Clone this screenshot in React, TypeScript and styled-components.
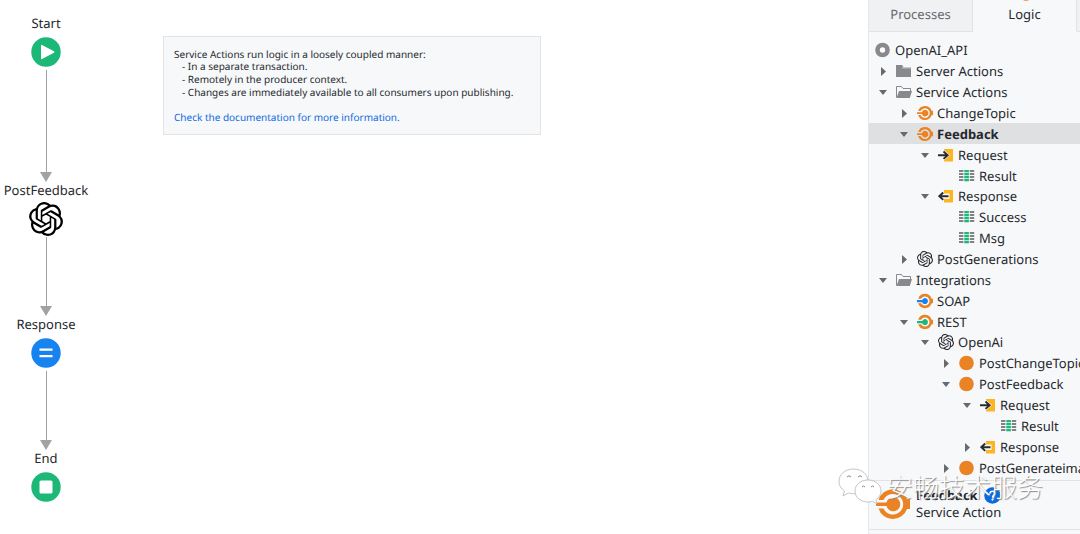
import React from "react";
import styled, { createGlobalStyle, css } from "styled-components";
import { SiOpenai } from "react-icons/si";

const GlobalStyle = createGlobalStyle`
  *, *::before, *::after { box-sizing: border-box; }
  body {
    margin: 0;
    background: #fff;
    color: #25282d;
    font-family: "Noto Sans", "Noto Sans CJK SC", sans-serif;
    font-size: 13px;
    line-height: 18px;
    text-rendering: geometricPrecision;
  }
  button { font: inherit; color: inherit; border: 0; padding: 0; background: none; cursor: pointer; text-rendering: inherit; }
`;

const Page = styled.div`
  position: relative;
  display: flex;
  min-height: 100vh;
  overflow: hidden;
`;

const Canvas = styled.main`
  flex: 1;
  min-width: 0;
  display: flex;
  align-items: flex-start;
  gap: 71px;
`;

const Flow = styled.div`
  display: flex;
  flex-direction: column;
  align-items: center;
  width: 92px;
  padding-top: 15px;
`;

const FlowNode = styled.div`
  display: flex;
  flex-direction: column;
  align-items: center;
  gap: 4px;
  line-height: 16px;
`;

const NodeIcon = styled.div`
  display: grid;
  place-items: center;
  width: 34px;
  height: 34px;
  color: #000;
`;

const Connector = styled.div<{ $length: number }>`
  display: flex;
  flex-direction: column;
  align-items: center;
  height: ${(p) => p.$length}px;
  padding-top: 1px;
  &::before {
    content: "";
    flex: 1;
    width: 1px;
    background: #a1a2a5;
  }
  &::after {
    content: "";
    border: 6px solid transparent;
    border-top: 10px solid #a1a2a5;
    border-bottom: 0;
  }
`;

const Comment = styled.section`
  width: 378px;
  margin-top: 36px;
  padding: 11px 11px 11px 10px;
  border: 1px solid #e2e3e5;
  background: #f7f8fa;
  font-size: 10px;
  line-height: 12px;
  white-space: nowrap;
`;

const CommentText = styled.p`
  margin: 0;
`;

const CommentList = styled.ul`
  list-style: none;
  margin: 0 0 12px;
  padding: 0 0 0 8px;
  line-height: 13px;
`;

const DocLink = styled.a`
  color: #0f6be0;
  text-decoration: none;
`;

const Panel = styled.aside`
  display: flex;
  flex-direction: column;
  flex: none;
  width: 212px;
  border-left: 1px solid #e6e7e9;
  background: #f7f8fa;
  overflow: hidden;
`;

const Tabs = styled.div`
  display: flex;
  height: 32px;
`;

const Tab = styled.button<{ $active?: boolean }>`
  position: relative;
  flex: none;
  width: 104px;
  padding-bottom: 3px;
  border-right: 1px solid #e2e3e5;
  border-bottom: 1px solid #e2e3e5;
  background: #f0f1f3;
  color: #66686d;
  ${(p) =>
    p.$active &&
    css`
      border-bottom-color: transparent;
      background: transparent;
      color: #25282d;
    `}
`;

const TabMark = styled.span`
  position: absolute;
  top: -7px;
  left: 49px;
  width: 8px;
  height: 8px;
  border-radius: 50%;
  background: #f29b57;
`;

const Tree = styled.ul`
  flex: 1;
  display: grid;
  grid-auto-rows: minmax(0, 1fr);
  margin: 0;
  padding: 8px 0 2px;
  list-style: none;
`;

const TreeRow = styled.li<{ $depth: number; $selected?: boolean }>`
  display: flex;
  align-items: center;
  gap: 4px;
  padding-left: ${(p) => 6 + Math.max(0, p.$depth - 1) * 21}px;
  white-space: nowrap;
  ${(p) =>
    p.$selected &&
    css`
      background: #dfe0e2;
      font-weight: 700;
    `}
`;

const Toggle = styled.button`
  display: grid;
  place-items: center start;
  padding-left: 3px;
  width: 17px;
  height: 16px;
`;

const ToggleSpace = styled.span`
  width: 17px;
`;

const RowIcon = styled.span`
  display: grid;
  place-items: center;
  width: 16px;
  height: 16px;
`;

const Details = styled.section`
  display: flex;
  gap: 6px;
  margin-bottom: 4px;
  padding: 6px 0 8px 7px;
  border-top: 1px solid #e2e3e5;
  border-bottom: 1px solid #e2e3e5;
  line-height: 17px;
`;

const DetailsTitle = styled.div`
  display: flex;
  align-items: center;
  gap: 6px;
  height: 17px;
  font-weight: 700;
`;

const HelpButton = styled.button`
  display: grid;
  place-items: center;
`;

const Watermark = styled.div`
  position: absolute;
  right: 37px;
  bottom: 28px;
  display: flex;
  align-items: center;
  gap: 5px;
  color: #fff;
  font-family: "Noto Sans CJK SC", sans-serif;
  font-size: 26px;
  font-weight: 300;
  line-height: 38px;
  text-shadow: 1px 1px 1px #85878a;
  pointer-events: none;
`;

const Circle = ({ color, children }: { color: string; children: React.ReactNode }) => (
  <svg width="30" height="30" viewBox="0 0 30 30" aria-hidden="true">
    <circle cx="15" cy="15" r="14.7" fill={color} />
    {children}
  </svg>
);

const StartIcon = () => (
  <Circle color="#1bb877">
    <path d="M10 8.5v13q0 1 1 .6l12-6.4q1-.7 0-1.4l-12-6.4q-1-.4-1 .6z" fill="#fff" />
  </Circle>
);

const AssignIcon = () => (
  <Circle color="#1683f0">
    <path d="M8.5 10.5h13v2.3h-13zM8.5 16.9h13v2.3h-13z" fill="#fff" />
  </Circle>
);

const EndIcon = () => (
  <Circle color="#1bb877">
    <rect x="8.5" y="8.5" width="13" height="13" rx="1.6" fill="#fff" />
  </Circle>
);

const ServiceIcon = ({ size = 16 }: { size?: number }) => (
  <svg width={size} height={size} viewBox="0 0 34 34" aria-hidden="true">
    <path d="M2.5 13A15 15 0 0 1 31 12h3v10h-3A15 15 0 0 1 2.5 21.5H7.5a10.3 10.3 0 1 0 0-8.5z" fill="#e98324" />
    <path d="M0 15.5h10.5a7 7 0 1 1 0 3.6H0z" fill="#e98324" />
  </svg>
);

const EndpointIcon = ({ color }: { color: string }) => (
  <svg width="16" height="16" viewBox="0 0 34 34" aria-hidden="true">
    <path d="M2.5 12A15 15 0 0 1 31 12h3v10h-3A15 15 0 0 1 2.5 22h6.3a9.6 9.6 0 1 0 0-10z" fill="#e98324" />
    <path d="M0 14.8h11a6.4 6.4 0 1 1 0 4.8H0z" fill={color} />
  </svg>
);

const ModuleIcon = () => (
  <svg width="16" height="16" viewBox="0 0 16 16" aria-hidden="true">
    <circle cx="7.5" cy="8" r="5" fill="#fff" stroke="#88898c" strokeWidth="4.6" />
  </svg>
);

const FolderIcon = () => (
  <svg width="16" height="16" viewBox="0 0 16 16" aria-hidden="true">
    <path d="M0 2h6l1.5 2H15v10H0z" fill="#88898c" />
    <path d="M6.2 4.8H15" stroke="#f7f8fa" strokeWidth=".8" />
  </svg>
);

const OpenFolderIcon = () => (
  <svg width="16" height="16" viewBox="0 0 16 16" aria-hidden="true">
    <path d="M.5 13.5v-11h5l1.5 2h7.5V7" fill="none" stroke="#88898c" />
    <path d="M3 7h13l-2.2 7H.5z" fill="#88898c" />
  </svg>
);

const InputIcon = () => (
  <svg width="16" height="16" viewBox="0 0 16 16" aria-hidden="true">
    <path d="M6 2h9v12.5H6z" fill="#fdb51e" />
    <path d="M5 2l7 6-7 6.5z" fill="#f7f8fa" />
    <path d="M0 8.2h9.5M5.5 4.5l4.2 3.7-4.2 3.7" fill="none" stroke="#292c31" strokeWidth="1.9" />
  </svg>
);

const OutputIcon = () => (
  <svg width="16" height="16" viewBox="0 0 16 16" aria-hidden="true">
    <path d="M6 2h9v12.5H6z" fill="#fdb51e" />
    <path d="M6 5.5h5.5V11H6z" fill="#f7f8fa" />
    <path d="M10.5 8.2H1.5M5.2 4.5L1.3 8.2l3.9 3.7" fill="none" stroke="#292c31" strokeWidth="1.9" />
  </svg>
);

const RecordIcon = () => (
  <svg width="16" height="16" viewBox="0 0 16 16" aria-hidden="true">
    {[2, 5, 8, 11].map((y) => (
      <React.Fragment key={y}>
        <path d={`M0 ${y}h4.4v2H0zM10.800 ${y}h4.400v2h-4.400z`} fill="#808285" />
        <path d={`M5.300 ${y}h4.600v2.300H5.300z`} fill="#1bb877" />
      </React.Fragment>
    ))}
  </svg>
);

const MethodIcon = () => (
  <svg width="16" height="16" viewBox="0 0 16 16" aria-hidden="true">
    <circle cx="7.5" cy="8" r="7.3" fill="#e98324" />
  </svg>
);

const HelpIcon = () => (
  <svg width="17" height="17" viewBox="0 0 17 17" aria-hidden="true">
    <circle cx="8.5" cy="8.5" r="8.3" fill="#0a6ae0" />
    <path d="M5.9 6.7q.2-2.4 2.6-2.4t2.6 2q0 1.200-1.300 2-1.200.7-1.200 2" fill="none" stroke="#fff" strokeWidth="1.6" />
    <circle cx="8.5" cy="12.6" r="1.1" fill="#fff" />
  </svg>
);

const Arrow = ({ open }: { open: boolean }) => (
  <svg width="10" height="10" viewBox="0 0 10 10" aria-hidden="true">
    <path d={open ? "M1 3h8L5 8z" : "M3 1l5 4.5L3 10z"} fill="#67696d" />
  </svg>
);

const ChatBubbles = () => (
  <svg width="44" height="38" viewBox="0 0 44 38" aria-hidden="true">
    <g fill="#fff" stroke="#b4b6b8" strokeWidth=".8">
      <path d="M15.5 1C7 1 1 6.5 1 13.5c0 4 2 7 5.5 9.5L5 28l5.5-3q2.5.8 5.5.8C24 25.8 30 20.5 30 13.5S24 1 15.5 1z" />
      <path d="M30 12c-7.5 0-13 4.8-13 11s5.5 11 13 11q2.500 0 4.500-.7L39 36l-1.200-4.200C41 29.600 43 26.600 43 23c0-6.200-5.500-11-13-11z" />
    </g>
    <g fill="none" stroke="#85878a">
      <path d="M9 9q2-2.500 4 0M20 9q2-2.500 4 0M24 19q1.500-2 3 0M33 19q1.500-2 3 0" />
    </g>
  </svg>
);

const icons = {
  module: <ModuleIcon />,
  folder: <FolderIcon />,
  openFolder: <OpenFolderIcon />,
  service: <ServiceIcon />,
  openai: <SiOpenai size={16} />,
  input: <InputIcon />,
  output: <OutputIcon />,
  record: <RecordIcon />,
  soap: <EndpointIcon color="#1683f0" />,
  rest: <EndpointIcon color="#1bb877" />,
  method: <MethodIcon />,
};

type Item = {
  depth: number;
  icon: keyof typeof icons;
  label: string;
  open?: boolean;
  selected?: boolean;
};

const items: Item[] = [
  { depth: 0, icon: "module", label: "OpenAI_API" },
  { depth: 1, icon: "folder", label: "Server Actions", open: false },
  { depth: 1, icon: "openFolder", label: "Service Actions", open: true },
  { depth: 2, icon: "service", label: "ChangeTopic", open: false },
  { depth: 2, icon: "service", label: "Feedback", open: true, selected: true },
  { depth: 3, icon: "input", label: "Request", open: true },
  { depth: 4, icon: "record", label: "Result" },
  { depth: 3, icon: "output", label: "Response", open: true },
  { depth: 4, icon: "record", label: "Success" },
  { depth: 4, icon: "record", label: "Msg" },
  { depth: 2, icon: "openai", label: "PostGenerations", open: false },
  { depth: 1, icon: "openFolder", label: "Integrations", open: true },
  { depth: 2, icon: "soap", label: "SOAP" },
  { depth: 2, icon: "rest", label: "REST", open: true },
  { depth: 3, icon: "openai", label: "OpenAi", open: true },
  { depth: 4, icon: "method", label: "PostChangeTopic", open: false },
  { depth: 4, icon: "method", label: "PostFeedback", open: true },
  { depth: 5, icon: "input", label: "Request", open: true },
  { depth: 6, icon: "record", label: "Result" },
  { depth: 5, icon: "output", label: "Response", open: false },
  { depth: 4, icon: "method", label: "PostGenerateimage", open: false },
];

const Step = ({ label, children }: { label: string; children: React.ReactNode }) => (
  <FlowNode>
    <span>{label}</span>
    <NodeIcon>{children}</NodeIcon>
  </FlowNode>
);

export default function App() {
  return (
    <Page>
      <GlobalStyle />
      <Canvas>
        <Flow>
          <Step label="Start"><StartIcon /></Step>
          <Connector $length={113} />
          <Step label="PostFeedback"><SiOpenai size={34} /></Step>
          <Connector $length={80} />
          <Step label="Response"><AssignIcon /></Step>
          <Connector $length={80} />
          <Step label="End"><EndIcon /></Step>
        </Flow>
        <Comment>
          <CommentText>Service Actions run logic in a loosely coupled manner:</CommentText>
          <CommentList>
            <li>- In a separate transaction.</li>
            <li>- Remotely in the producer context.</li>
            <li>- Changes are immediately available to all consumers upon publishing.</li>
          </CommentList>
          <DocLink href="#documentation">Check the documentation for more information.</DocLink>
        </Comment>
      </Canvas>
      <Panel>
        <Tabs role="tablist">
          <Tab role="tab" aria-selected={false}>Processes</Tab>
          <Tab role="tab" aria-selected $active><TabMark />Logic</Tab>
          <Tab role="tab" aria-selected={false} />
        </Tabs>
        <Tree role="tree">
          {items.map((item, i) => (
            <TreeRow
              key={i}
              role="treeitem"
              aria-expanded={item.open}
              aria-selected={!!item.selected}
              $depth={item.depth}
              $selected={item.selected}
            >
              {item.open !== undefined ? (
                <Toggle aria-label={`Toggle ${item.label}`}><Arrow open={item.open} /></Toggle>
              ) : (
                item.depth > 0 && <ToggleSpace />
              )}
              <RowIcon>{icons[item.icon]}</RowIcon>
              <span>{item.label}</span>
            </TreeRow>
          ))}
        </Tree>
        <Details>
          <ServiceIcon size={34} />
          <div>
            <DetailsTitle>
              Feedback
              <HelpButton aria-label="Help"><HelpIcon /></HelpButton>
            </DetailsTitle>
            <div>Service Action</div>
          </div>
        </Details>
      </Panel>
      <Watermark>
        <ChatBubbles />
        <span>安畅技术服务</span>
      </Watermark>
    </Page>
  );
}
